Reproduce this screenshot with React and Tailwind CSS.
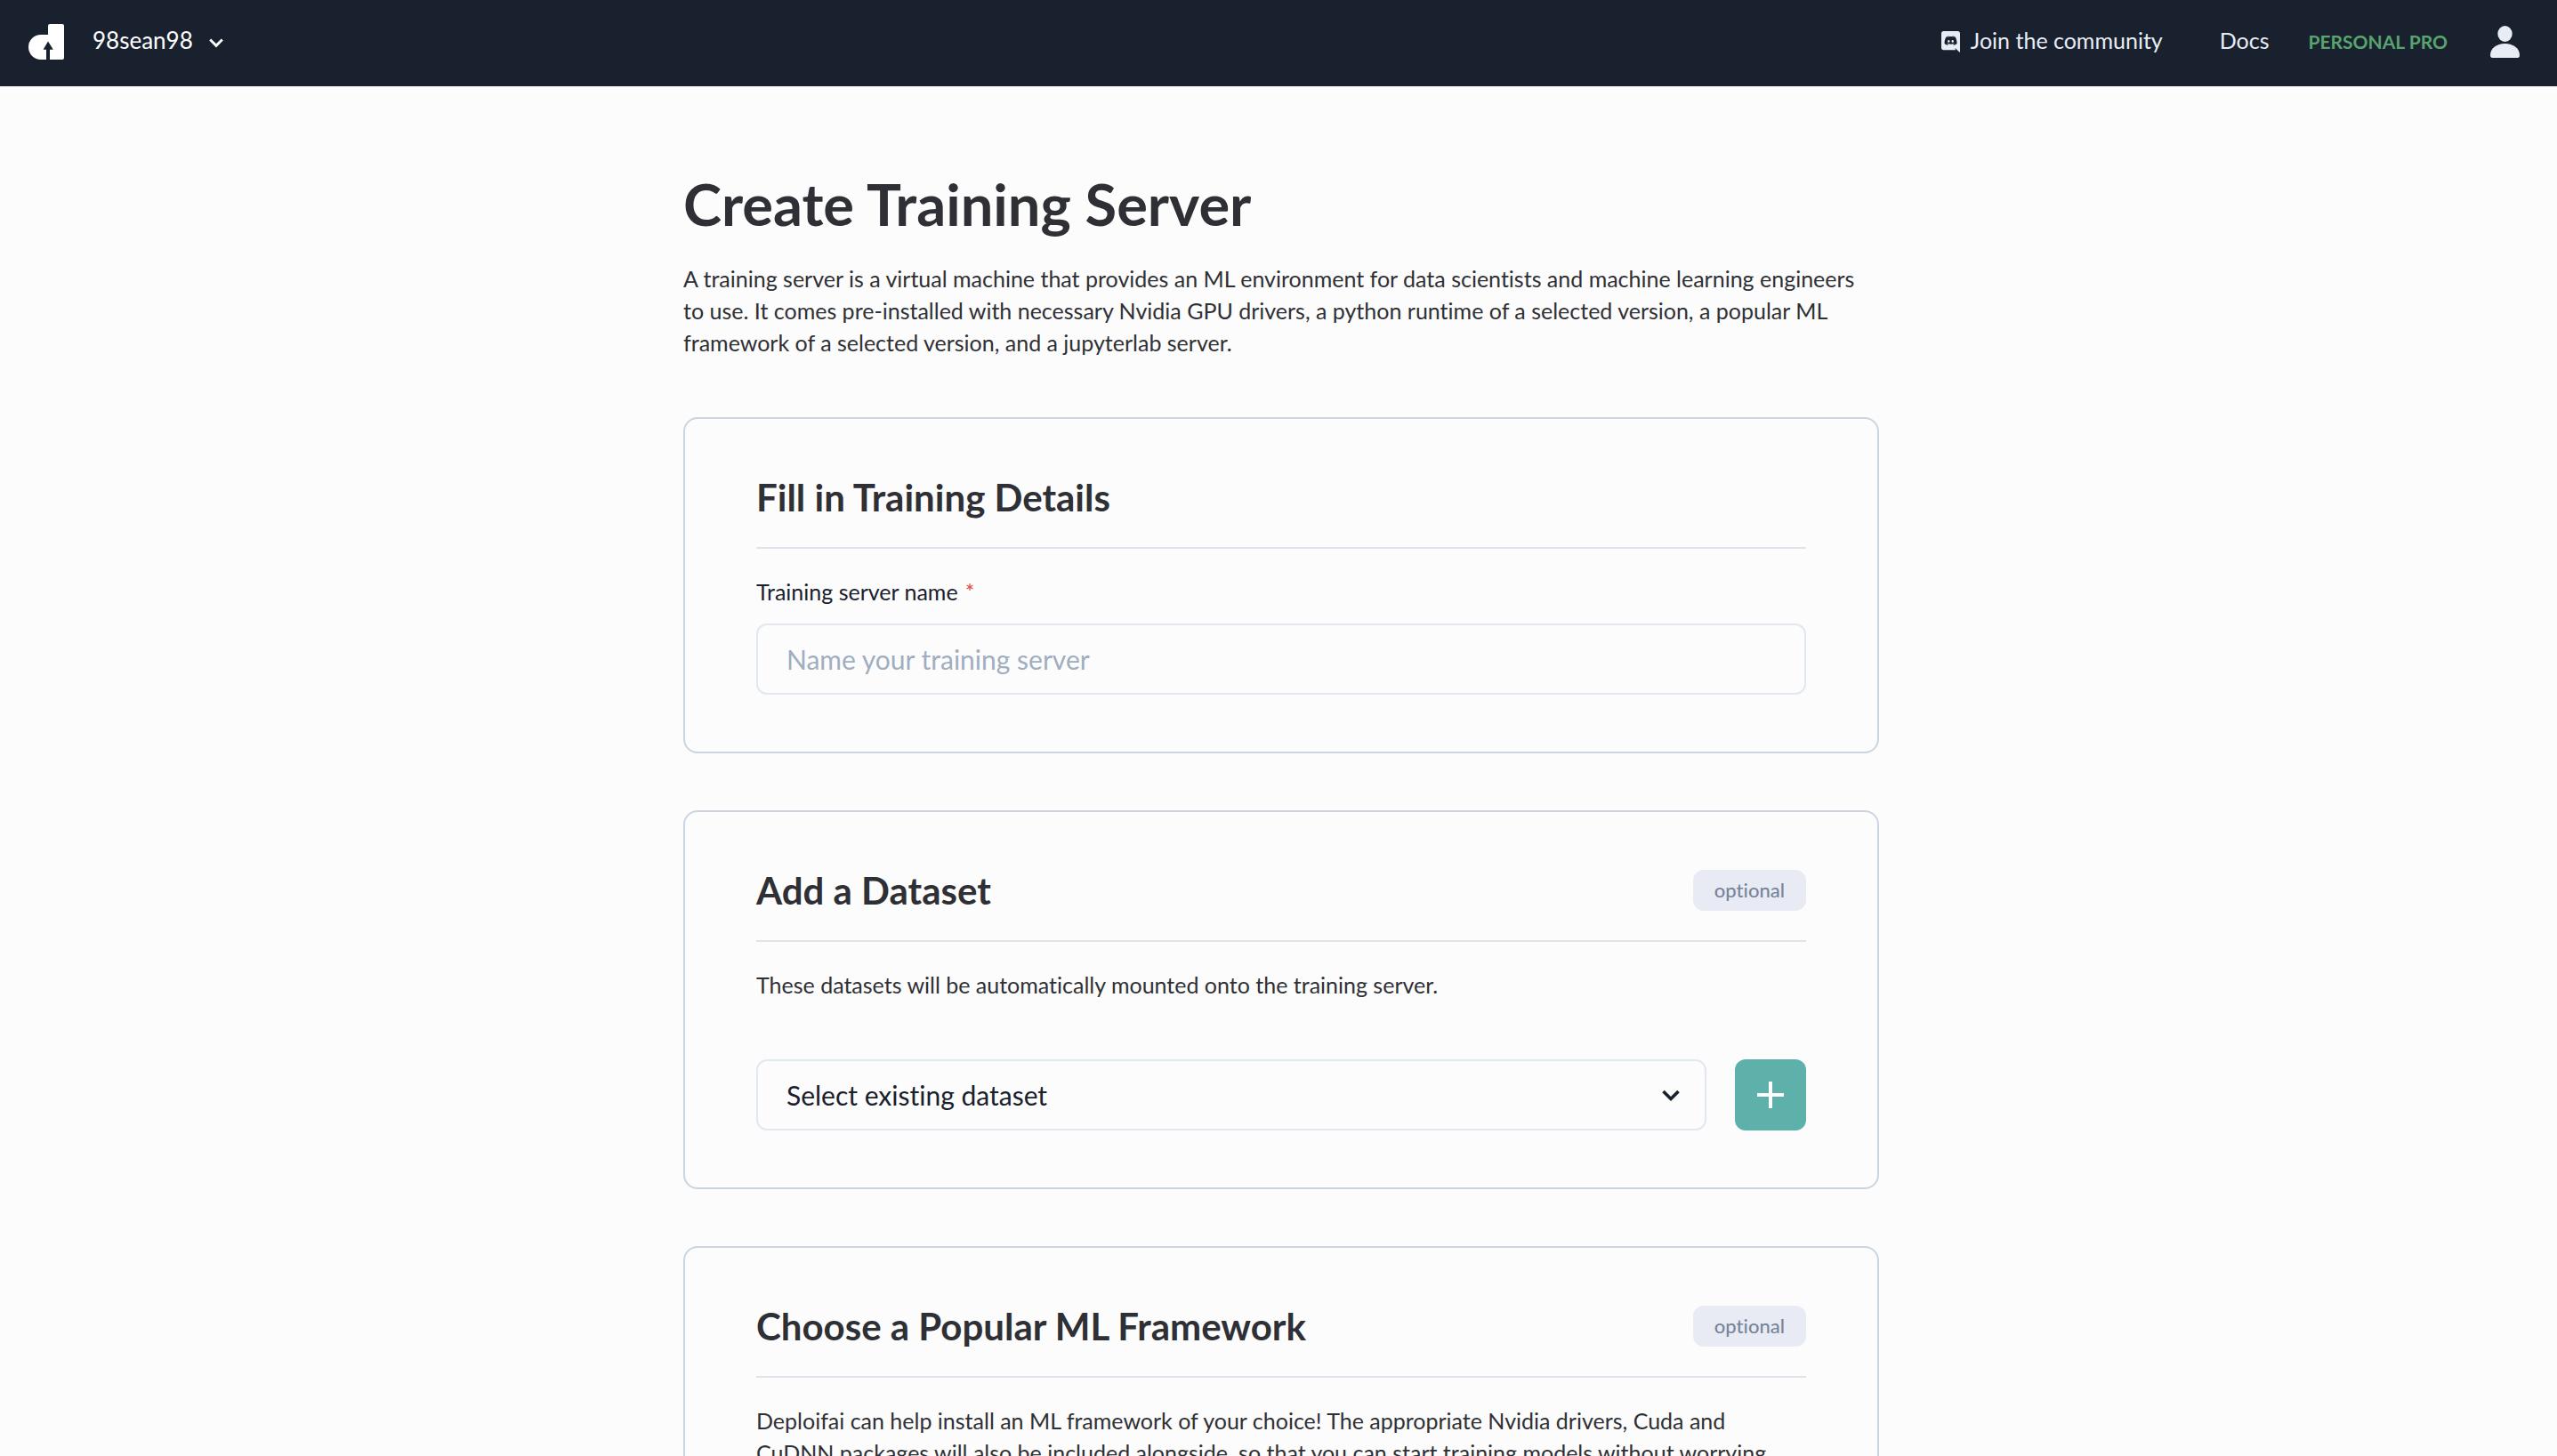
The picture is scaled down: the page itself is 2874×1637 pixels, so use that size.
import { useState } from "react";

function Logo() {
  return (
    <svg viewBox="0 0 40 40" className="size-10" fill="#fff" aria-hidden="true">
      <path
        fillRule="evenodd"
        d="M24 0H38Q40 0 40 2V38Q40 40 38 40H24V28.8H27.8L22 19.4L16.6 28.8H20V40H14A14 14 0 0 1 14 12H22V2Q22 0 24 0Z"
      />
    </svg>
  );
}

function Chevron({ className }) {
  return (
    <svg viewBox="0 0 20 14" className={className} fill="none" stroke="currentColor" strokeWidth="3.6" aria-hidden="true">
      <path d="M1.5 2L10 10.5L18.5 2" />
    </svg>
  );
}

function DiscordIcon() {
  return (
    <svg viewBox="0 0 448 512" className="mt-1 h-6 w-[21px]" fill="currentColor" aria-hidden="true">
      <path d="M297.216 243.2c0 15.616-11.52 28.416-26.112 28.416-14.336 0-26.112-12.8-26.112-28.416s11.52-28.416 26.112-28.416c14.592 0 26.112 12.8 26.112 28.416zm-119.552-28.416c-14.592 0-26.112 12.8-26.112 28.416s11.776 28.416 26.112 28.416c14.592 0 26.112-12.8 26.112-28.416.256-15.616-11.52-28.416-26.112-28.416zM448 52.736V512c-64.494-56.994-43.868-38.128-118.784-107.776l13.568 47.36H52.48C23.552 451.584 0 428.032 0 398.848V52.736C0 23.552 23.552 0 52.48 0h343.04C424.448 0 448 23.552 448 52.736zm-72.96 242.688c0-82.432-36.864-149.248-36.864-149.248-36.864-27.648-71.936-26.88-71.936-26.88l-3.584 4.096c43.52 13.312 63.744 32.512 63.744 32.512-60.811-33.329-132.244-33.335-191.232-7.424-9.472 4.352-15.104 7.424-15.104 7.424s21.248-20.224 67.328-33.536l-2.56-3.072s-35.072-.768-71.936 26.88c0 0-36.864 66.816-36.864 149.248 0 0 21.504 37.12 78.08 38.912 0 0 9.472-11.52 17.152-21.248-32.512-9.728-44.8-30.208-44.8-30.208 3.766 2.636 9.976 6.053 10.496 6.4 43.21 24.198 104.588 32.126 159.744 8.96 8.96-3.328 18.944-8.192 29.44-15.104 0 0-12.8 20.992-46.336 30.464 7.68 9.728 16.896 20.736 16.896 20.736 56.576-1.792 78.336-38.912 78.336-38.912z" />
    </svg>
  );
}

function UserIcon() {
  return (
    <svg viewBox="0 0 33 36" className="h-9 w-[33px]" fill="currentColor" aria-hidden="true">
      <ellipse cx="16.5" cy="9" rx="8.2" ry="9" />
      <path d="M0 33C0 25.5 7 20 16.5 20S33 25.5 33 33Q33 36 30.5 36H2.5Q0 36 0 33Z" />
    </svg>
  );
}

function NavBar() {
  return (
    <header className="flex h-[97px] shrink-0 items-center justify-between bg-[#19212f] pr-[42px] pb-[3px] pl-8 text-[25px] leading-9 text-[#e8ecf4]">
      <div className="flex items-center gap-8">
        <a href="#home" aria-label="Home">
          <Logo />
        </a>
        <button type="button" className="flex items-center gap-[18px] pb-1 text-[26px] text-white">
          98sean98
          <Chevron className="mt-2 w-4" />
        </button>
      </div>
      <nav className="flex items-center">
        <a href="#community" className="mr-16 flex items-center gap-3 pb-1">
          <DiscordIcon />
          Join the community
        </a>
        <a href="#docs" className="mr-11 pb-1">
          Docs
        </a>
        <span className="mr-12 text-[21px] font-bold text-[#58a36e]">PERSONAL PRO</span>
        <button type="button" aria-label="Account">
          <UserIcon />
        </button>
      </nav>
    </header>
  );
}

function Card({ title, optional, children }) {
  return (
    <section className="mb-16 rounded-2xl border-2 border-[#cbd5e0] px-20 py-16">
      <div className="flex items-center justify-between border-b-2 border-[#dee4ea] pb-8">
        <h2 className="text-[42px] leading-[48px] font-bold">{title}</h2>
        {optional && (
          <span className="rounded-xl bg-[#e8ebf3] px-6 text-[22px] leading-[46px] font-medium text-[#76859b]">
            optional
          </span>
        )}
      </div>
      {children}
    </section>
  );
}

export default function App() {
  const [name, setName] = useState("");
  return (
    <div className="flex h-screen flex-col overflow-hidden bg-[#fcfcfc] font-['Lato','Open_Sans',sans-serif] text-[#2f3035] [font-variant-ligatures:none]">
      <NavBar />
      <main className="mx-auto w-full max-w-[1350px] pt-[94px] pl-[6px] text-[25px] leading-9">
        <h1 className="mb-7 text-[65px] leading-[76px] font-bold">Create Training Server</h1>
        <p className="mb-[66px]">
          A training server is a virtual machine that provides an ML environment for data scientists and machine learning
          engineers
          <br />
          to use. It comes pre-installed with necessary Nvidia GPU drivers, a python runtime of a selected version, a
          popular ML
          <br />
          framework of a selected version, and a jupyterlab server.
        </p>

        <Card title="Fill in Training Details">
          <label htmlFor="server-name" className="mt-[30px] mb-[18px] block text-[#1a202c]">
            Training server name<span className="ml-2 text-[#e04b46]">*</span>
          </label>
          <input
            id="server-name"
            type="text"
            required
            value={name}
            onChange={(e) => setName(e.target.value)}
            placeholder="Name your training server"
            className="block h-20 w-full rounded-xl border-2 border-[#e2e8f0] px-8 text-[30px] text-[#1a202c] placeholder:text-[#a0aec0]"
          />
        </Card>

        <Card title="Add a Dataset" optional>
          <p className="mt-[30px] mb-[66px]">These datasets will be automatically mounted onto the training server.</p>
          <div className="flex gap-8">
            <div className="relative grow">
              <select
                aria-label="Dataset"
                className="block h-20 w-full appearance-none rounded-xl border-2 border-[#e2e8f0] px-8 text-[30px] text-[#1a202c]"
              >
                <option>Select existing dataset</option>
              </select>
              <Chevron className="pointer-events-none absolute top-[34px] right-[30px] w-5 text-[#1a202c]" />
            </div>
            <button
              type="button"
              aria-label="Add dataset"
              className="flex size-20 items-center justify-center rounded-xl bg-[#5eb0ab] text-white"
            >
              <svg viewBox="0 0 30 30" className="size-[30px]" stroke="currentColor" strokeWidth="4" aria-hidden="true">
                <path d="M15 0V30M0 15H30" />
              </svg>
            </button>
          </div>
        </Card>

        <Card title="Choose a Popular ML Framework" optional>
          <p className="mt-[30px]">
            Deploifai can help install an ML framework of your choice! The appropriate Nvidia drivers, Cuda and
            <br />
            CuDNN packages will also be included alongside, so that you can start training models without worrying
          </p>
        </Card>
      </main>
    </div>
  );
}
